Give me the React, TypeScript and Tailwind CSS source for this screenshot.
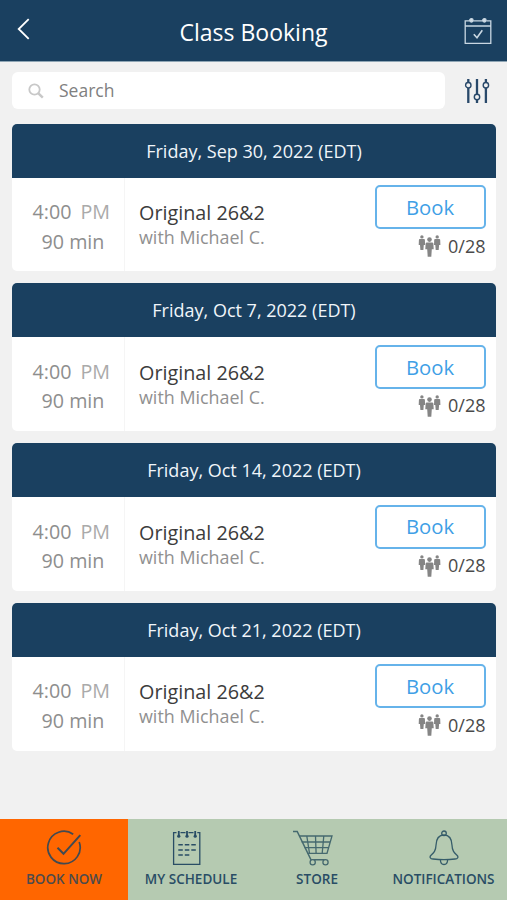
const classes = [
  { id: 1, date: 'Friday, Sep 30, 2022 (EDT)' },
  { id: 2, date: 'Friday, Oct 7, 2022 (EDT)' },
  { id: 3, date: 'Friday, Oct 14, 2022 (EDT)' },
  { id: 4, date: 'Friday, Oct 21, 2022 (EDT)' },
];

function CalendarCheckIcon() {
  return (
    <svg width="28" height="28" viewBox="0 0 28 28" fill="none" stroke="#c9d7e2" strokeWidth="1.3">
      <path d="M5.5 3.8H1.2v22.6h25.6V3.8h-4.3M9.3 3.8h9.3M1.2 9h25.6" />
      <circle cx="7.4" cy="3.3" r="1.7" fill="#d3dfe8" />
      <circle cx="20.4" cy="3.3" r="1.7" fill="#d3dfe8" />
      <path d="M9.8 17.2l3.2 3.6 5.3-7.6" strokeWidth="1.6" />
    </svg>
  );
}

function SlidersIcon() {
  return (
    <svg width="26" height="26" viewBox="0 0 26 26" fill="none" stroke="#29496a">
      <path d="M4.3 1v3M4.3 10v15M13 1v15M13 22v3M21.9 1v3M21.9 10v15" strokeWidth="2.3" />
      <circle cx="4.3" cy="7.2" r="2.7" strokeWidth="1.4" />
      <circle cx="13" cy="18.9" r="2.7" strokeWidth="1.4" />
      <circle cx="21.9" cy="7.2" r="2.7" strokeWidth="1.4" />
    </svg>
  );
}

function PeopleIcon() {
  return (
    <svg width="23" height="22" viewBox="0 0 23 22" fill="#858585">
      <circle cx="3.9" cy="1.9" r="1.7" />
      <path d="M1.8 3.9H6q.9.1.9 1l.2 5H5.8l-.4 5H2.4l-.4-5H.7l.2-5q0-.9.9-1z" />
      <circle cx="19.2" cy="1.9" r="1.7" />
      <path d="M17.1 3.9h4.2q.9.1.9 1l.2 5h-1.3l-.4 5h-3l-.4-5H16l.2-5q0-.9.9-1z" />
      <circle cx="11.5" cy="4.6" r="2.3" />
      <path d="M8.5 7.5h6q.9.2.9 1.2l.3 5.6h-1.9l-.5 7.4H9.7l-.5-7.4H7.3l.3-5.6q0-1 .9-1.2z" />
    </svg>
  );
}

function BookNowIcon() {
  return (
    <svg width="36" height="36" viewBox="0 0 36 36" fill="none" stroke="#414a51" strokeWidth="1.7">
      <path d="M27.2 4.2A16.2 16.2 0 1 0 33.2 12" />
      <path d="M11.5 17.8l6 6L34.3 5.2" strokeWidth="2" />
    </svg>
  );
}

function ScheduleIcon() {
  return (
    <svg className="-ml-2" width="30" height="36" viewBox="0 0 30 36" fill="none" stroke="#294d65" strokeWidth="1.3">
      <path d="M4.5 2.7H1.6v31.7h26.2V2.7h-2.5M8.5 2.7h5M16.5 2.7h5" />
      <path d="M6.8 1v6M15 1v6M23.2 1v6" strokeWidth="1.8" />
      <circle cx="6.8" cy="6.2" r="1.6" fill="#294d65" stroke="none" />
      <circle cx="15" cy="6.2" r="1.6" fill="#294d65" stroke="none" />
      <circle cx="23.2" cy="6.2" r="1.6" fill="#294d65" stroke="none" />
      <path d="M6.3 14.7h4.5M12.8 14.7h4.5M19.3 14.7h4.5M6.3 19.9h4.5M12.8 19.9h4.5M19.3 19.9h4.5M6.3 25.1h4.5M12.8 25.1h4.5" strokeWidth="1.5" />
    </svg>
  );
}

function CartIcon() {
  return (
    <svg className="-ml-2" width="42" height="36" viewBox="0 0 42 36" fill="none" stroke="#45696f" strokeWidth="1.3">
      <path d="M1 1.5h4.2L19 29.8h15" strokeWidth="1.5" />
      <path d="M7 6h33l-5 17.3H15.5M9.7 12h28.5M12.5 17.6h24.2M14.8 6l2.7 17.3M23.5 6l.6 17.3M31.8 6l-1.6 17.3" />
      <circle cx="20.7" cy="32.2" r="2.6" fill="#b5cab1" />
      <circle cx="33.5" cy="32.2" r="2.6" fill="#b5cab1" />
    </svg>
  );
}

function BellIcon() {
  return (
    <svg width="30" height="36" viewBox="0 0 30 36" fill="none" stroke="#365d6a" strokeWidth="1.3">
      <circle cx="15" cy="3.3" r="2.3" />
      <path d="M15 5C9.2 5 7.2 9.8 7 15.2C6.8 21 4.6 22.8 2 25.2C.2 27 1.2 28.8 4 29Q15 30.2 26 29C28.8 28.8 29.8 27 28 25.2C25.4 22.8 23.2 21 23 15.2C22.8 9.8 20.8 5 15 5z" />
      <path d="M11.4 29.7c0 6.4 7.2 6.4 7.2 0" />
    </svg>
  );
}

export default function App() {
  return (
    <div className="flex h-[900px] w-[507px] flex-col overflow-hidden bg-[#f1f1f1] font-['Open_Sans','Noto_Sans',sans-serif]">
      {/* Header */}
      <header className="grid h-[62px] shrink-0 grid-cols-[60px_1fr_60px] items-center border-b border-[#8fa6b5] bg-[#1a4060] text-white">
        <button className="-mt-1 pl-[17px]" aria-label="Back">
          <svg width="14" height="22" viewBox="0 0 14 22" fill="none" stroke="#fff" strokeWidth="1.8">
            <path d="M11.7 1.2L1.7 11l10 9.8" />
          </svg>
        </button>
        <h1 className="pt-[2px] text-center text-[23px] leading-8">Class Booking</h1>
        <div className="flex pl-[17px]">
          <CalendarCheckIcon />
        </div>
      </header>

      {/* Search */}
      <div className="flex shrink-0 items-center pt-[10px] pl-3">
        <div className="flex h-[37px] w-[433px] items-center rounded-md bg-white pl-4">
          <svg width="16" height="16" viewBox="0 0 16 16" fill="none" stroke="#c8c8c8">
            <circle cx="6.5" cy="6.5" r="5.2" strokeWidth="1.8" />
            <path d="M10.4 10.4l4.4 4.2" strokeWidth="2.5" />
          </svg>
          <span className="pl-[15px] text-[17.5px] text-[#808080]">Search</span>
        </div>
        <div className="pl-[19px]">
          <SlidersIcon />
        </div>
      </div>

      {/* Class list */}
      <main className="flex grow flex-col gap-[12px] px-3 pt-[14.8px] pr-[11px]">
        {classes.map((item) => (
          <section key={item.id} className="h-[147.7px] shrink-0 overflow-hidden rounded-[5px] bg-white">
            <h2 className="flex h-[54px] items-center justify-center bg-[#1a4060] pt-px text-[18px] text-[#f0f5fa]">{item.date}</h2>
            <div className="flex h-[94px]">
              <div className="flex w-[113px] flex-col border-r border-[#f5f5f5] pt-[19.5px] text-[19.7px] leading-[29.5px] text-[#8e8e8e]">
                <div className="pl-[20.5px] whitespace-pre">
                  4:00<span className="pl-[9px] text-[#aaaaaa]">PM</span>
                </div>
                <div className="pl-[29.5px]">90 min</div>
              </div>
              <div className="grow pt-[22.5px] pl-[14px]">
                <div className="text-[19.8px] leading-[26px] text-[#3c3c3c]">Original 26&amp;2</div>
                <div className="text-[17.9px] leading-[23px] text-[#909090]">with Michael C.</div>
              </div>
              <div className="flex flex-col items-end pt-[7.5px] pr-[10.5px]">
                <button className="h-[44px] w-[111px] rounded-[5px] border-2 border-[#66b3ea] text-[20.3px] text-[#3fa0e6]">Book</button>
                <div className="mt-1 flex h-[26px] items-center gap-[7px] text-[18px] text-[#4a4a4a]">
                  <PeopleIcon />
                  <span>0/28</span>
                </div>
              </div>
            </div>
          </section>
        ))}
      </main>

      {/* Bottom tabs */}
      <nav className="grid h-[81px] shrink-0 grid-cols-[128px_126px_126px_127px] bg-[#b5cab1] text-[13.5px] leading-[18px] font-semibold text-[#294d65]">
        <a className="flex flex-col items-center gap-[4px] bg-[#ff6600] pt-[11px] text-[#4e4b4b]">
          <BookNowIcon />
          <span>BOOK NOW</span>
        </a>
        <a className="flex flex-col items-center gap-[4px] pt-[11px]">
          <ScheduleIcon />
          <span>MY SCHEDULE</span>
        </a>
        <a className="flex flex-col items-center gap-[4px] pt-[11px]">
          <CartIcon />
          <span>STORE</span>
        </a>
        <a className="flex flex-col items-center gap-[4px] pt-[11px]">
          <BellIcon />
          <span>NOTIFICATIONS</span>
        </a>
      </nav>
    </div>
  );
}
